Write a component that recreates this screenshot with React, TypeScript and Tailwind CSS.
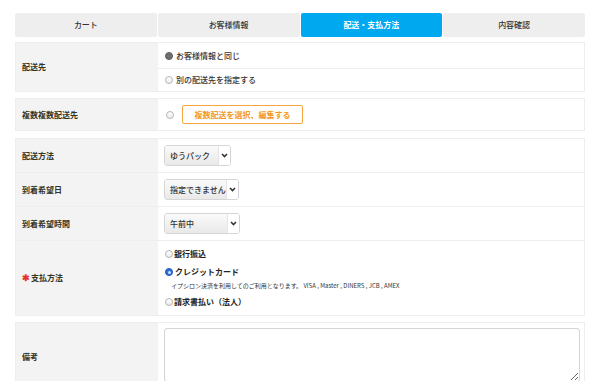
import React from 'react';

const font = { fontFamily: '"Noto Sans CJK JP", "Noto Sans", sans-serif' };

const tabs = ['カート', 'お客様情報', '配送・支払方法', '内容確認'];

const Radio: React.FC<{ checked?: boolean; tone?: 'gray' | 'blue' }> = ({
  checked,
  tone = 'gray',
}) => {
  if (!checked) {
    return (
      <span className="inline-block w-[8px] h-[8px] rounded-full border border-[#b5b5b5] bg-gradient-to-b from-white to-[#ececec] shrink-0" />
    );
  }
  if (tone === 'blue') {
    return (
      <span className="inline-flex items-center justify-center w-[8px] h-[8px] rounded-full bg-[#2f6fd8] border border-[#2158b8] shrink-0">
        <span className="w-[3px] h-[3px] rounded-full bg-[#c9dbff]" />
      </span>
    );
  }
  return (
    <span className="inline-block w-[8px] h-[8px] rounded-full bg-[#6f6f6f] border border-[#5c5c5c] shrink-0" />
  );
};

const Select: React.FC<{ label: string; width: string }> = ({ label, width }) => (
  <div
    className={`flex h-[21px] ${width} rounded-[3px] border border-[#d6d6d6] overflow-hidden`}
  >
    <div className="flex-1 flex items-center pl-[5px] bg-gradient-to-b from-[#fafafa] to-[#e9e9e9] text-[8px] font-medium text-[#333] whitespace-nowrap overflow-hidden">
      {label}
    </div>
    <div className="w-[12px] shrink-0 flex items-center justify-center bg-white border-l border-[#e4e4e4]">
      <svg width="7" height="5" viewBox="0 0 7 5">
        <path d="M1 1l2.5 2.5L6 1" fill="none" stroke="#333" strokeWidth="1.6" />
      </svg>
    </div>
  </div>
);

const Label: React.FC<{ children: React.ReactNode }> = ({ children }) => (
  <div className="w-[142px] shrink-0 bg-[#f3f3f3] flex items-center pl-[6px] text-[8px] font-bold text-[#35331d]">
    {children}
  </div>
);

const App: React.FC = () => {
  return (
    <div className="w-[600px] h-[381px] bg-white overflow-hidden pt-[13px] px-[15px]" style={font}>
      <div className="flex gap-[1px] h-[24px]">
        {tabs.map((t, i) => (
          <div
            key={t}
            className={
              i === 2
                ? 'flex-1 flex items-center justify-center bg-[#00a8ef] text-white text-[8px] font-bold rounded-[2px]'
                : 'flex-1 flex items-center justify-center bg-[#eeeeee] text-[#333] text-[8px] font-medium rounded-[2px]'
            }
          >
            {t}
          </div>
        ))}
      </div>

      {/* 配送先 */}
      <div className="mt-[5px] flex h-[50px] border border-[#eeeeee]">
        <Label>配送先</Label>
        <div className="flex-1 flex flex-col">
          <div className="h-[26px] flex items-center gap-[3px] pl-[7px] border-b border-[#eeeeee] text-[8px] font-medium text-[#333]">
            <Radio checked />
            お客様情報と同じ
          </div>
          <div className="flex-1 flex items-center gap-[3px] pl-[7px] text-[8px] font-medium text-[#333]">
            <Radio />
            別の配送先を指定する
          </div>
        </div>
      </div>

      {/* 複数配送先 */}
      <div className="mt-[6px] flex h-[33px] border border-[#eeeeee]">
        <Label>複数複数配送先</Label>
        <div className="flex-1 flex items-center pl-[8px] gap-[8px]">
          <Radio />
          <div className="h-[19px] w-[121px] flex items-center justify-center border border-[#f7a53f] rounded-[2px] text-[8px] font-bold text-[#f39a26]">
            複数配送を選択、編集する
          </div>
        </div>
      </div>

      {/* 配送・支払 */}
      <div className="mt-[7px] flex flex-col border border-[#eeeeee]">
        <div className="flex h-[34px] border-b border-[#eeeeee]">
          <Label>配送方法</Label>
          <div className="flex-1 flex items-center pl-[6px]">
            <Select label="ゆうパック" width="w-[67px]" />
          </div>
        </div>
        <div className="flex h-[34px] border-b border-[#eeeeee]">
          <Label>到着希望日</Label>
          <div className="flex-1 flex items-center pl-[6px]">
            <Select label="指定できません" width="w-[75px]" />
          </div>
        </div>
        <div className="flex h-[34px] border-b border-[#eeeeee]">
          <Label>到着希望時間</Label>
          <div className="flex-1 flex items-center pl-[6px]">
            <Select label="午前中" width="w-[76px]" />
          </div>
        </div>
        <div className="flex h-[74px]">
          <Label>
            <span className="text-[#e8322b] text-[9px] mr-[1px]">✱</span>支払方法
          </Label>
          <div className="flex-1 flex flex-col justify-center pl-[7px] text-[8px] text-[#222] font-bold gap-[6px]">
            <div className="flex items-center gap-[1px]">
              <Radio />
              銀行振込
            </div>
            <div className="flex flex-col gap-[3px]">
              <div className="flex items-center gap-[2px]">
                <Radio checked tone="blue" />
                クレジットカード
              </div>
              <div className="pl-[6px] text-[6px] font-normal text-[#333]">
                イプシロン決済を利用してのご利用となります。 VISA , Master , DINERS , JCB , AMEX
              </div>
            </div>
            <div className="flex items-center gap-[1px]">
              <Radio />
              請求書払い（法人）
            </div>
          </div>
        </div>
      </div>

      {/* 備考 */}
      <div className="mt-[6px] flex h-[70px] border border-[#eeeeee]">
        <Label>備考</Label>
        <div className="flex-1 pl-[6px] pr-[4px] pt-[5px]">
          <textarea className="w-full h-[54px] border border-[#d4d4d4] rounded-[3px] resize-y" />
        </div>
      </div>
    </div>
  );
};

export default App;
